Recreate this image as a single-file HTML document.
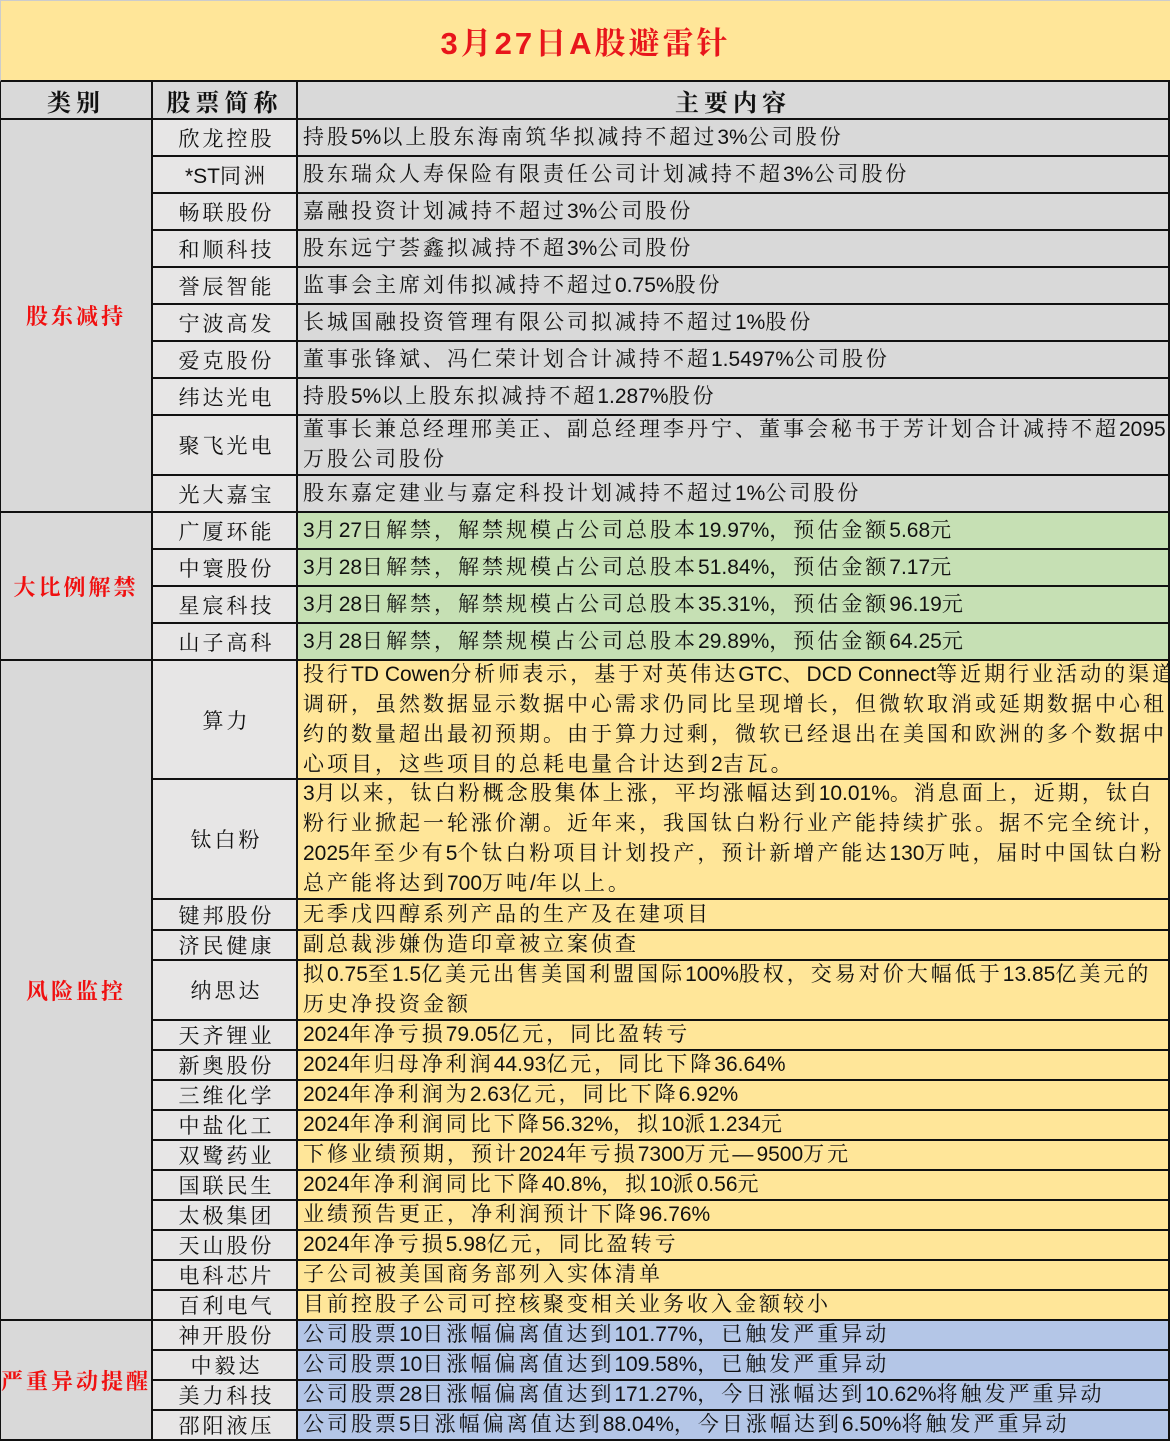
<!DOCTYPE html>
<html><head><meta charset="utf-8">
<style>
*{margin:0;padding:0;box-sizing:border-box}
body{width:1170px;height:1441px;background:#fff;font-family:"Liberation Sans","Noto Serif CJK SC","Noto Sans CJK SC",serif;overflow:hidden}
.g{display:grid;width:1170px;grid-template-columns:153px 145px 872px;
grid-template-rows:82px 38px 37px 37px 37px 37px 37px 37px 37px 37px 60px 37px 37px 37px 37px 37px 119px 120px 31px 30px 60px 30px 30px 30px 30px 30px 30px 30px 30px 30px 30px 30px 30px 30px 30px;}
.g>div{border-right:2px solid #111;border-bottom:2px solid #111;display:flex;align-items:center;font-size:21px;letter-spacing:3px;color:#111;white-space:nowrap;overflow:hidden}
.g>div>span{display:block}
i{font-style:normal;letter-spacing:0}
.t{grid-column:1/4;background:#FFE699;justify-content:center;color:#E8151B!important;font-size:31px!important;font-weight:bold;border:1px solid #ccc;border-bottom:2px solid #111!important;border-right:0!important}
.h{background:#D9D9D9;justify-content:center;font-weight:bold;font-size:24px!important;letter-spacing:5px!important}
.c{background:#D9D9D9;justify-content:center;color:#F01010!important;font-weight:bold;font-size:22px!important;grid-column:1;border-left:1px solid #111}
.n{background:#E7E6E6;justify-content:center;grid-column:2;padding-left:4px}
.x{grid-column:3;padding-left:5px;line-height:30px}
.w{background:#D9D9D9}.gr{background:#C6E0B4}.y{background:#FFE699}.b{background:#B4C6E7}
</style></head><body>
<div class="g">
<div class="t">3月27日A股避雷针</div>
<div class="h" style="border-left:1px solid #111">类别</div><div class="h">股票简称</div><div class="h">主要内容</div>

<div class="c" style="grid-row:3/13">股东减持</div>
<div class="n">欣龙控股</div><div class="x w"><span>持股<i>5%</i>以上股东海南筑华拟减持不超过<i>3%</i>公司股份</span></div>
<div class="n"><span><i>*ST</i>同洲</span></div><div class="x w"><span>股东瑞众人寿保险有限责任公司计划减持不超<i>3%</i>公司股份</span></div>
<div class="n">畅联股份</div><div class="x w"><span>嘉融投资计划减持不超过<i>3%</i>公司股份</span></div>
<div class="n">和顺科技</div><div class="x w"><span>股东远宁荟鑫拟减持不超<i>3%</i>公司股份</span></div>
<div class="n">誉辰智能</div><div class="x w"><span>监事会主席刘伟拟减持不超过<i>0.75%</i>股份</span></div>
<div class="n">宁波高发</div><div class="x w"><span>长城国融投资管理有限公司拟减持不超过<i>1%</i>股份</span></div>
<div class="n">爱克股份</div><div class="x w"><span>董事张锋斌、冯仁荣计划合计减持不超<i>1.5497%</i>公司股份</span></div>
<div class="n">纬达光电</div><div class="x w"><span>持股<i>5%</i>以上股东拟减持不超<i>1.287%</i>股份</span></div>
<div class="n">聚飞光电</div><div class="x w"><span>董事长兼总经理邢美正、副总经理李丹宁、董事会秘书于芳计划合计减持不超<i>2095</i><br>万股公司股份</span></div>
<div class="n">光大嘉宝</div><div class="x w"><span>股东嘉定建业与嘉定科投计划减持不超过<i>1%</i>公司股份</span></div>

<div class="c" style="grid-row:13/17">大比例解禁</div>
<div class="n">广厦环能</div><div class="x gr"><span><i>3</i>月<i>27</i>日解禁，解禁规模占公司总股本<i>19.97%</i>，预估金额<i>5.68</i>元</span></div>
<div class="n">中寰股份</div><div class="x gr"><span><i>3</i>月<i>28</i>日解禁，解禁规模占公司总股本<i>51.84%</i>，预估金额<i>7.17</i>元</span></div>
<div class="n">星宸科技</div><div class="x gr"><span><i>3</i>月<i>28</i>日解禁，解禁规模占公司总股本<i>35.31%</i>，预估金额<i>96.19</i>元</span></div>
<div class="n">山子高科</div><div class="x gr"><span><i>3</i>月<i>28</i>日解禁，解禁规模占公司总股本<i>29.89%</i>，预估金额<i>64.25</i>元</span></div>

<div class="c" style="grid-row:17/32">风险监控</div>
<div class="n">算力</div><div class="x y"><span>投行<i>TD Cowen</i>分析师表示，基于对英伟达<i>GTC</i>、<i>DCD Connect</i>等近期行业活动的渠道<br>调研，虽然数据显示数据中心需求仍同比呈现增长，但微软取消或延期数据中心租<br>约的数量超出最初预期。由于算力过剩，微软已经退出在美国和欧洲的多个数据中<br>心项目，这些项目的总耗电量合计达到<i>2</i>吉瓦。</span></div>
<div class="n">钛白粉</div><div class="x y"><span><i>3</i>月以来，钛白粉概念股集体上涨，平均涨幅达到<i>10.01%</i>。消息面上，近期，钛白<br>粉行业掀起一轮涨价潮。近年来，我国钛白粉行业产能持续扩张。据不完全统计，<br><i>2025</i>年至少有<i>5</i>个钛白粉项目计划投产，预计新增产能达<i>130</i>万吨，届时中国钛白粉<br>总产能将达到<i>700</i>万吨<i>/</i>年以上。</span></div>
<div class="n">键邦股份</div><div class="x y"><span>无季戊四醇系列产品的生产及在建项目</span></div>
<div class="n">济民健康</div><div class="x y"><span>副总裁涉嫌伪造印章被立案侦查</span></div>
<div class="n">纳思达</div><div class="x y"><span>拟<i>0.75</i>至<i>1.5</i>亿美元出售美国利盟国际<i>100%</i>股权，交易对价大幅低于<i>13.85</i>亿美元的<br>历史净投资金额</span></div>
<div class="n">天齐锂业</div><div class="x y"><span><i>2024</i>年净亏损<i>79.05</i>亿元，同比盈转亏</span></div>
<div class="n">新奥股份</div><div class="x y"><span><i>2024</i>年归母净利润<i>44.93</i>亿元，同比下降<i>36.64%</i></span></div>
<div class="n">三维化学</div><div class="x y"><span><i>2024</i>年净利润为<i>2.63</i>亿元，同比下降<i>6.92%</i></span></div>
<div class="n">中盐化工</div><div class="x y"><span><i>2024</i>年净利润同比下降<i>56.32%</i>，拟<i>10</i>派<i>1.234</i>元</span></div>
<div class="n">双鹭药业</div><div class="x y"><span>下修业绩预期，预计<i>2024</i>年亏损<i>7300</i>万元—<i>9500</i>万元</span></div>
<div class="n">国联民生</div><div class="x y"><span><i>2024</i>年净利润同比下降<i>40.8%</i>，拟<i>10</i>派<i>0.56</i>元</span></div>
<div class="n">太极集团</div><div class="x y"><span>业绩预告更正，净利润预计下降<i>96.76%</i></span></div>
<div class="n">天山股份</div><div class="x y"><span><i>2024</i>年净亏损<i>5.98</i>亿元，同比盈转亏</span></div>
<div class="n">电科芯片</div><div class="x y"><span>子公司被美国商务部列入实体清单</span></div>
<div class="n">百利电气</div><div class="x y"><span>目前控股子公司可控核聚变相关业务收入金额较小</span></div>

<div class="c" style="grid-row:32/36">严重异动提醒</div>
<div class="n">神开股份</div><div class="x b"><span>公司股票<i>10</i>日涨幅偏离值达到<i>101.77%</i>，已触发严重异动</span></div>
<div class="n">中毅达</div><div class="x b"><span>公司股票<i>10</i>日涨幅偏离值达到<i>109.58%</i>，已触发严重异动</span></div>
<div class="n">美力科技</div><div class="x b"><span>公司股票<i>28</i>日涨幅偏离值达到<i>171.27%</i>，今日涨幅达到<i>10.62%</i>将触发严重异动</span></div>
<div class="n">邵阳液压</div><div class="x b"><span>公司股票<i>5</i>日涨幅偏离值达到<i>88.04%</i>，今日涨幅达到<i>6.50%</i>将触发严重异动</span></div>
</div>
</body></html>
